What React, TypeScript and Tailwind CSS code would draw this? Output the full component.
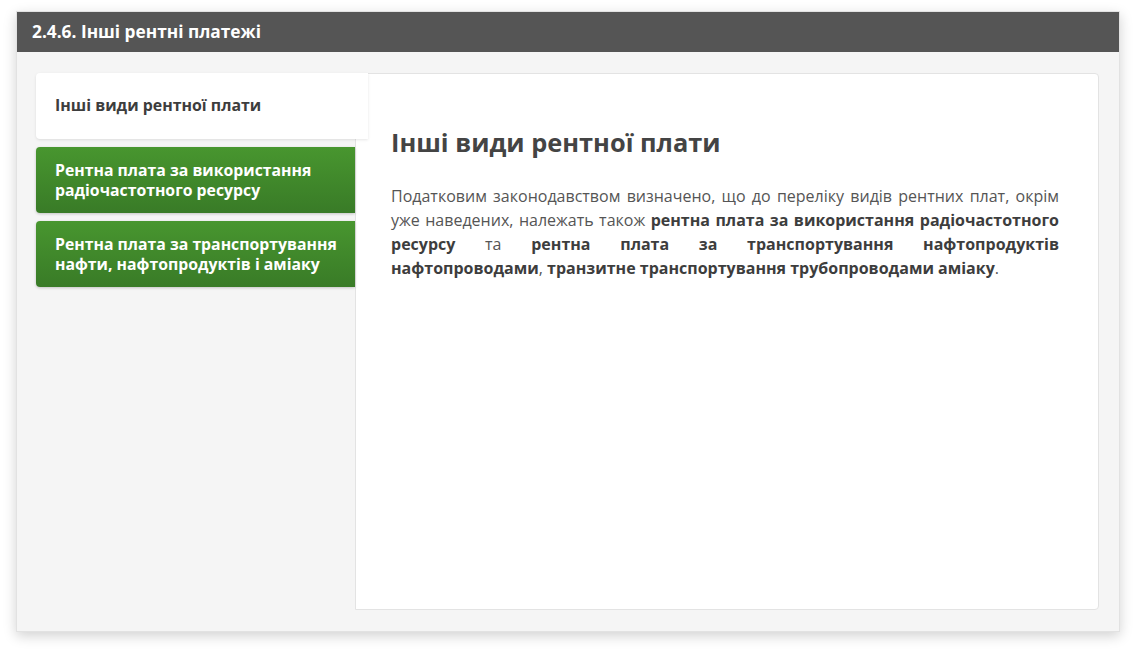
import React from "react";

export default function App() {
  return (
    <div
      className="w-[1136px] h-[653px] bg-white pt-[11px] pl-[16px]"
      style={{ fontFamily: '"Open Sans", "Noto Sans", sans-serif' }}
    >
      <div className="w-[1104px] h-[621px] bg-[#f5f5f5] flex flex-col shadow-[0_4px_12px_rgba(0,0,0,0.18)] border border-[#e2e2e2]">
        <div className="h-[40px] bg-[#555555] flex items-center px-[15px] shrink-0">
          <span className="text-white font-bold text-[17.3px]">2.4.6. Інші рентні платежі</span>
        </div>
        <div className="flex-1 flex pt-[21px] pl-[19px] pr-[20px] pb-[21px]">
          <div className="w-[319px] flex flex-col gap-[8px] shrink-0 relative z-10">
            <div className="h-[66px] bg-white rounded-l-[4px] flex items-center pl-[19px] mr-[-13px] shadow-[0_1px_3px_rgba(0,0,0,0.1)]">
              <span className="text-[#3d3d3d] font-bold text-[15.9px]">Інші види рентної плати</span>
            </div>
            <div className="h-[66px] rounded-l-[4px] bg-gradient-to-b from-[#48962f] to-[#397b27] flex items-center pl-[19px] shadow-[0_1px_3px_rgba(0,0,0,0.2)]">
              <span className="text-white font-bold text-[15.8px] leading-[20px]">
                Рентна плата за використання
                <br />
                радіочастотного ресурсу
              </span>
            </div>
            <div className="h-[66px] rounded-l-[4px] bg-gradient-to-b from-[#48962f] to-[#397b27] flex items-center pl-[19px] shadow-[0_1px_3px_rgba(0,0,0,0.2)]">
              <span className="text-white font-bold text-[15.8px] leading-[20px]">
                Рентна плата за транспортування
                <br />
                нафти, нафтопродуктів і аміаку
              </span>
            </div>
          </div>
          <div className="flex-1 bg-white border border-[#e3e3e3] rounded-r-[4px] pl-[35px] pr-[39px] pt-[50px]">
            <h2 className="text-[25.4px] font-bold text-[#444444] leading-[36px]">Інші види рентної плати</h2>
            <p className="mt-[24px] text-[16px] leading-[24px] text-[#555555] text-justify">
              Податковим законодавством визначено, що до переліку видів рентних плат, окрім уже наведених, належать також{" "}
              <b className="text-[#3d3d3d]">рентна плата за використання радіочастотного ресурсу</b> та{" "}
              <b className="text-[#3d3d3d]">рентна плата за транспортування нафтопродуктів нафтопроводами</b>,{" "}
              <b className="text-[#3d3d3d]">транзитне транспортування трубопроводами аміаку</b>.
            </p>
          </div>
        </div>
      </div>
    </div>
  );
}
